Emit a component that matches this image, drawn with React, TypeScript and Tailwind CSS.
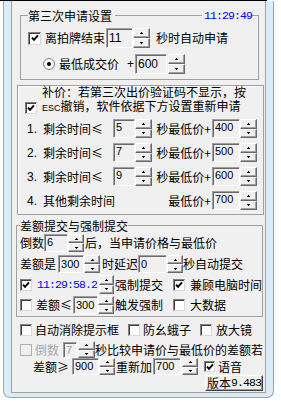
import React from "react";

const mono = "font-['Liberation_Mono',monospace] text-[11.5px] tracking-[-0.9px]";

function Arrow({ down }: { down?: boolean }) {
  return (
    <svg width="3" height="2" viewBox="0 0 3 2" shapeRendering="crispEdges">
      {down ? (
        <>
          <rect x="0" y="0" width="3" height="1" fill="#000" />
          <rect x="1" y="1" width="1" height="1" fill="#000" />
        </>
      ) : (
        <>
          <rect x="1" y="0" width="1" height="1" fill="#000" />
          <rect x="0" y="1" width="3" height="1" fill="#000" />
        </>
      )}
    </svg>
  );
}

const SpinHalf = ({ down }: { down?: boolean }) => (
  <div className="flex-1 flex items-center justify-center border border-t-white border-l-white border-r-[#696969] border-b-[#696969] shadow-[inset_-1px_-1px_0_#a0a0a0] bg-[#f0f0f0]">
    <Arrow down={down} />
  </div>
);

function Spin({ className = "" }: { className?: string }) {
  return (
    <div className={`flex flex-col shrink-0 ${className}`}>
      <SpinHalf />
      <SpinHalf down />
    </div>
  );
}

function Field({
  value,
  className = "",
  disabled,
  top,
}: {
  value: string;
  className?: string;
  disabled?: boolean;
  top?: boolean;
}) {
  return (
    <div
      className={`flex shrink-0 pl-[2px] border border-t-[#a0a0a0] border-l-[#a0a0a0] border-r-white border-b-white shadow-[inset_1px_1px_0_#696969] bg-[#f0f0f0] font-['Liberation_Sans',sans-serif] text-[11px] leading-none ${
        top ? "items-start pt-[2px]" : "items-center"
      } ${disabled ? "text-[#a0a0a0]" : "text-black"} ${className}`}
    >
      {value}
    </div>
  );
}

function Check({
  checked,
  disabled,
  className = "",
}: {
  checked?: boolean;
  disabled?: boolean;
  className?: string;
}) {
  return (
    <div
      className={`shrink-0 flex items-center justify-center border ${
        disabled
          ? "border-[#b0b0b0] bg-[#f0f0f0]"
          : "border-t-[#808080] border-l-[#808080] border-r-[#d8d8d8] border-b-[#d8d8d8] shadow-[inset_1px_1px_0_#404040] bg-white"
      } ${className || "w-[12px] h-[12px]"}`}
    >
      {checked && (
        <svg width="8" height="8" viewBox="0 0 8 8">
          <path d="M1 3.6 L3 5.8 L7 1.4" stroke="#000" strokeWidth="1.9" fill="none" />
        </svg>
      )}
    </div>
  );
}

function PriceRow({ num, label, sec, price }: { num: string; label: string; sec?: string; price: string }) {
  return (
    <div className="flex items-center h-[19px]">
      <span className="ml-[2px] w-[16px] font-['Liberation_Sans',sans-serif] text-[12px]">{num}</span>
      <span className="w-[70px] whitespace-nowrap">{label}</span>
      {sec && (
        <>
          <Field value={sec} top className="w-[22px] h-[19px]" />
          <Spin className="w-[17px] h-[19px]" />
        </>
      )}
      <div className="ml-auto flex items-center">
        <span className="pr-[1px] whitespace-nowrap">{sec ? "秒最低价+" : "最低价+"}</span>
        <Field value={price} top className="w-[28px] h-[19px]" />
        <Spin className="w-[17px] h-[19px]" />
      </div>
    </div>
  );
}

export default function App() {
  return (
    <div className="w-[281px] h-[407px] bg-white overflow-hidden font-['Noto_Sans_CJK_SC',sans-serif] text-[12px] leading-[14px] text-black">
      <div className="h-px w-[267px] bg-black" />
      <div className="ml-[3px] w-[271px] h-[397px] border-x border-b border-[#97a3af] rounded-b-[7px] bg-[#dcebf8] px-[7px] pb-[4px]">
        <div className="h-[391px] box-content border-x border-b border-[#a0a0a0] bg-[#f0f0f0] flex flex-col">
          {/* 第三次申请设置 */}
          <fieldset className="mt-[8px] ml-[8px] w-[239px] border border-[#a0a0a0] pl-[7px] pt-[6px] pb-[5px]">
            <legend className="w-[224px] h-[13px] leading-[13px] flex">
              <span className="pr-[3px] whitespace-nowrap">第三次申请设置</span>
              <span className="flex-1 h-px mt-[6px] bg-[#a0a0a0]" />
              <span className={`pl-[2px] text-[#0000ff] ${mono}`}>11:29:49</span>
            </legend>
            <div className="flex items-center h-[20px]">
              <Check checked className="w-[13px] h-[13px]" />
              <span className="ml-[4px] whitespace-nowrap">离拍牌结束</span>
              <Field value="11" className="ml-[1px] w-[27px] h-[20px] text-[12px]" />
              <Spin className="w-[17px] h-[20px]" />
              <span className="ml-[6px] whitespace-nowrap">秒时自动申请</span>
            </div>
            <div className="flex items-center h-[20px] mt-[6px]">
              <div className="ml-[15px] w-[12px] h-[12px] rounded-full border border-[#808080] bg-[#fafafa] flex items-center justify-center">
                <div className="w-[4px] h-[4px] rounded-full bg-black" />
              </div>
              <span className="ml-[4px] whitespace-nowrap">最低成交价</span>
              <span className="ml-[8px] w-[8px] font-['Liberation_Sans',sans-serif]">+</span>
              <Field value="600" className="w-[32px] h-[20px] text-[12px]" />
              <Spin className="ml-[1px] w-[17px] h-[20px]" />
            </div>
          </fieldset>

          {/* 补价 */}
          <div className="mt-[5px] ml-[5px] w-[247px] border border-[#a0a0a0] shadow-[inset_1px_1px_0_#fff] pl-[7px] pr-[6px] pb-[4px]">
            <div className="flex items-start">
              <Check checked className="mt-[16px] w-[12px] h-[12px]" />
              <div className="ml-[5px] -mt-[1px] leading-[14px] whitespace-nowrap">
                <div>补价：若第三次出价验证码不显示，按</div>
                <div>
                  <span className="font-['Liberation_Sans',sans-serif] text-[9px]">ESC</span>撤销，软件依据下方设置重新申请
                </div>
              </div>
            </div>
            <div className="mt-[4px] flex flex-col gap-[5px]">
              <PriceRow num="1." label="剩余时间≤" sec="5" price="400" />
              <PriceRow num="2." label="剩余时间≤" sec="7" price="500" />
              <PriceRow num="3." label="剩余时间≤" sec="9" price="600" />
              <PriceRow num="4." label="其他剩余时间" price="700" />
            </div>
          </div>

          {/* 差额提交与强制提交 */}
          <fieldset className="mt-[4px] ml-[4px] w-[247px] border border-[#a0a0a0] pl-[3px] pt-[2px] pb-[2px]">
            <legend className="h-[13px] leading-[13px] whitespace-nowrap">差额提交与强制提交</legend>
            <div className="flex items-center h-[18px]">
              <span className="w-[24px]">倒数</span>
              <Field value="6" top className="w-[24px] h-[18px]" />
              <Spin className="w-[16px] h-[18px]" />
              <span className="ml-[1px] whitespace-nowrap">后，当申请价格与最低价</span>
            </div>
            <div className="flex items-center h-[18px] mt-[3px]">
              <span className="whitespace-nowrap">差额是</span>
              <Field value="300" className="ml-[2px] w-[26px] h-[18px]" />
              <Spin className="w-[16px] h-[18px]" />
              <span className="ml-[2px] whitespace-nowrap">时延迟</span>
              <Field value="0" className="w-[29px] h-[18px]" />
              <Spin className="w-[16px] h-[18px]" />
              <span className="whitespace-nowrap">秒自动提交</span>
            </div>
            <div className="flex items-center h-[19px] mt-[2px]">
              <Check checked />
              <span className={`ml-[5px] w-[60px] text-[#0000ff] ${mono}`}>11:29:58.2</span>
              <Spin className="ml-[2px] w-[15px] h-[19px]" />
              <span className="ml-[1px] whitespace-nowrap">强制提交</span>
              <Check checked className="ml-[10px] w-[12px] h-[12px]" />
              <span className="ml-[5px] whitespace-nowrap">兼顾电脑时间</span>
            </div>
            <div className="flex items-center h-[18px] mt-[2px]">
              <Check />
              <span className="ml-[4px] w-[37px] whitespace-nowrap">差额≤</span>
              <Field value="300" className="w-[25px] h-[18px]" />
              <Spin className="w-[16px] h-[18px]" />
              <span className="ml-[1px] whitespace-nowrap">触发强制</span>
              <Check className="ml-[10px] w-[12px] h-[12px]" />
              <span className="ml-[5px] whitespace-nowrap">大数据</span>
            </div>
          </fieldset>

          <div className="flex items-center h-[14px] mt-[6px]">
            <Check className="ml-[8px] w-[12px] h-[12px]" />
            <span className="ml-[3px] whitespace-nowrap">自动消除提示框</span>
            <Check className="ml-[9px] w-[12px] h-[12px]" />
            <span className="ml-[3px] whitespace-nowrap">防幺蛾子</span>
            <Check className="ml-[9px] w-[12px] h-[12px]" />
            <span className="ml-[4px] whitespace-nowrap">放大镜</span>
          </div>

          <div className="flex items-center h-[17px] mt-[4px]">
            <Check disabled className="ml-[8px] w-[12px] h-[12px]" />
            <span className="ml-[3px] text-[#a8a8a8]">倒数</span>
            <Field value="7" disabled top className="ml-[4px] w-[14px] h-[16px]" />
            <Spin className="ml-[1px] w-[17px] h-[17px]" />
            <span className="whitespace-nowrap">秒比较申请价与最低价的差额若</span>
          </div>

          <div className="flex items-center h-[17px]">
            <span className="ml-[21px] w-[38px] whitespace-nowrap">差额≥</span>
            <Field value="900" top className="ml-[1px] w-[27px] h-[17px]" />
            <Spin className="w-[16px] h-[17px]" />
            <span className="ml-[1px] whitespace-nowrap">重新加</span>
            <Field value="700" top className="ml-[1px] w-[28px] h-[17px]" />
            <Spin className="ml-[1px] w-[16px] h-[17px]" />
            <Check checked className="ml-[6px] w-[11px] h-[11px]" />
            <span className="ml-[3px] whitespace-nowrap">语音</span>
          </div>

          <div className="self-end mr-[2px] w-[58px] h-[16px] flex items-center justify-center border border-t-white border-l-white border-r-[#404040] border-b-[#404040] shadow-[inset_-1px_-1px_0_#a0a0a0] bg-[#f0f0f0] whitespace-nowrap leading-none">
            版本<span className={mono}>9.483</span>
          </div>
        </div>
      </div>
    </div>
  );
}
